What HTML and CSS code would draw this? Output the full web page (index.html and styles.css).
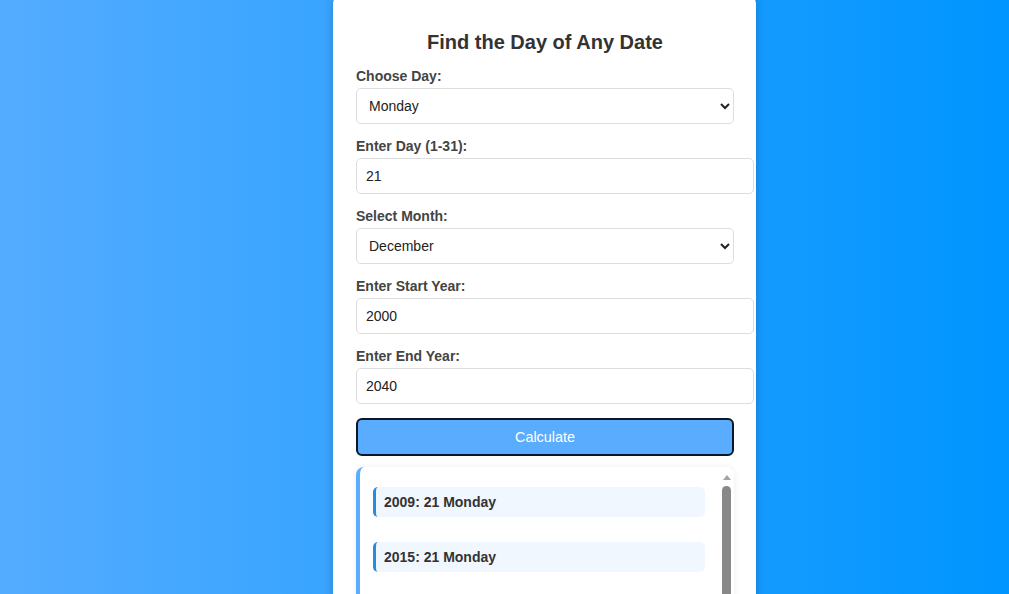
FILE: index.html
```html
<!DOCTYPE html>
<html lang="en">
<head>
<meta charset="utf-8">
<title>Find the Day of Any Date</title>
<link rel="stylesheet" href="styles.css">
</head>
<body>
<main class="card">
  <h2 class="title">Find the Day of Any Date</h2>
  <div class="field">
    <label class="label" for="day">Choose Day:</label>
    <select id="day" class="control select">
      <option>Sunday</option>
      <option selected>Monday</option>
      <option>Tuesday</option>
      <option>Wednesday</option>
      <option>Thursday</option>
      <option>Friday</option>
      <option>Saturday</option>
    </select>
  </div>
  <div class="field">
    <label class="label" for="date">Enter Day (1-31):</label>
    <input id="date" class="control input" type="number" value="21">
  </div>
  <div class="field">
    <label class="label" for="month">Select Month:</label>
    <select id="month" class="control select">
      <option>January</option>
      <option>February</option>
      <option>March</option>
      <option>April</option>
      <option>May</option>
      <option>June</option>
      <option>July</option>
      <option>August</option>
      <option>September</option>
      <option>October</option>
      <option>November</option>
      <option selected>December</option>
    </select>
  </div>
  <div class="field">
    <label class="label" for="start">Enter Start Year:</label>
    <input id="start" class="control input" type="number" value="2000">
  </div>
  <div class="field">
    <label class="label" for="end">Enter End Year:</label>
    <input id="end" class="control input" type="number" value="2040">
  </div>
  <button class="btn" type="button">Calculate</button>
  <div class="results">
    <div class="list">
      <div class="result">2009: 21 Monday</div>
      <div class="result">2015: 21 Monday</div>
      <div class="result">2020: 21 Monday</div>
      <div class="result">2026: 21 Monday</div>
      <div class="result">2037: 21 Monday</div>
    </div>
    <div class="scrollbar" aria-hidden="true">
      <span class="sb-arrow"></span>
      <span class="sb-thumb"></span>
    </div>
  </div>
</main>
</body>
</html>
```
FILE: styles.css
```css
html, body {
  height: 100%;
  overflow: hidden;
}
body {
  margin: 0;
  padding-left: 333px;
  background: linear-gradient(to right, #54acff, #0095ff);
  font-family: "Liberation Sans", Arial, sans-serif;
  display: flex;
  align-items: flex-start;
}
.card {
  width: 378px;
  margin-top: -6px;
  padding: 37px 22px 40px 23px;
  background: #fff;
  border-radius: 10px;
  box-shadow: 0 0 10px rgba(0, 0, 0, 0.2);
}
.title {
  margin: 0 0 14px;
  text-align: center;
  font-size: 20px;
  line-height: 23px;
  color: #333;
}
.field {
  margin-bottom: 14px;
}
.label {
  display: block;
  font-size: 14px;
  line-height: 16px;
  font-weight: bold;
  color: #444;
  margin-bottom: 4px;
}
.control {
  font-family: "Liberation Sans", Arial, sans-serif;
  font-size: 14px;
  color: #222;
  border: 1px solid #ddd;
  border-radius: 5px;
  background: #fff;
  height: 36px;
}
.select {
  width: 100%;
  padding: 0 8px;
  box-sizing: border-box;
}
.input {
  display: block;
  width: 100%;
  padding: 0 9px 0 9px;
  box-sizing: content-box;
  height: 34px;
}
.input::-webkit-inner-spin-button,
.input::-webkit-outer-spin-button {
  -webkit-appearance: none;
  margin: 0;
}
.btn {
  display: block;
  width: 100%;
  height: 38px;
  background: #5aacff;
  color: #fff;
  font-family: "Liberation Sans", Arial, sans-serif;
  font-size: 14.4px;
  border: 2px solid #0b1626;
  border-radius: 6px;
}
.results {
  margin-top: 11px;
  height: 200px;
  display: flex;
  overflow: hidden;
  border-left: 4px solid #5aacff;
  border-radius: 8px;
  box-shadow: 0 0 6px rgba(0, 0, 0, 0.08);
}
.list {
  flex: 1;
  min-width: 0;
  padding: 20px 14px 20px 13px;
  display: flex;
  flex-direction: column;
  gap: 25px;
  overflow: hidden;
}
.scrollbar {
  flex: none;
  width: 15px;
  display: flex;
  flex-direction: column;
  align-items: center;
  padding-top: 8px;
}
.sb-arrow {
  width: 0;
  height: 0;
  border-left: 4.5px solid transparent;
  border-right: 4.5px solid transparent;
  border-bottom: 5px solid #a3a3a3;
  margin-bottom: 6px;
}
.sb-thumb {
  width: 9px;
  height: 150px;
  background: #888;
  border-radius: 5px;
}
.result {
  flex: none;
  padding: 7px 8px;
  line-height: 16px;
  background: #f1f7fe;
  border-left: 3px solid #2a8bd8;
  border-radius: 5px;
  font-size: 14px;
  font-weight: bold;
  color: #333;
}
```
